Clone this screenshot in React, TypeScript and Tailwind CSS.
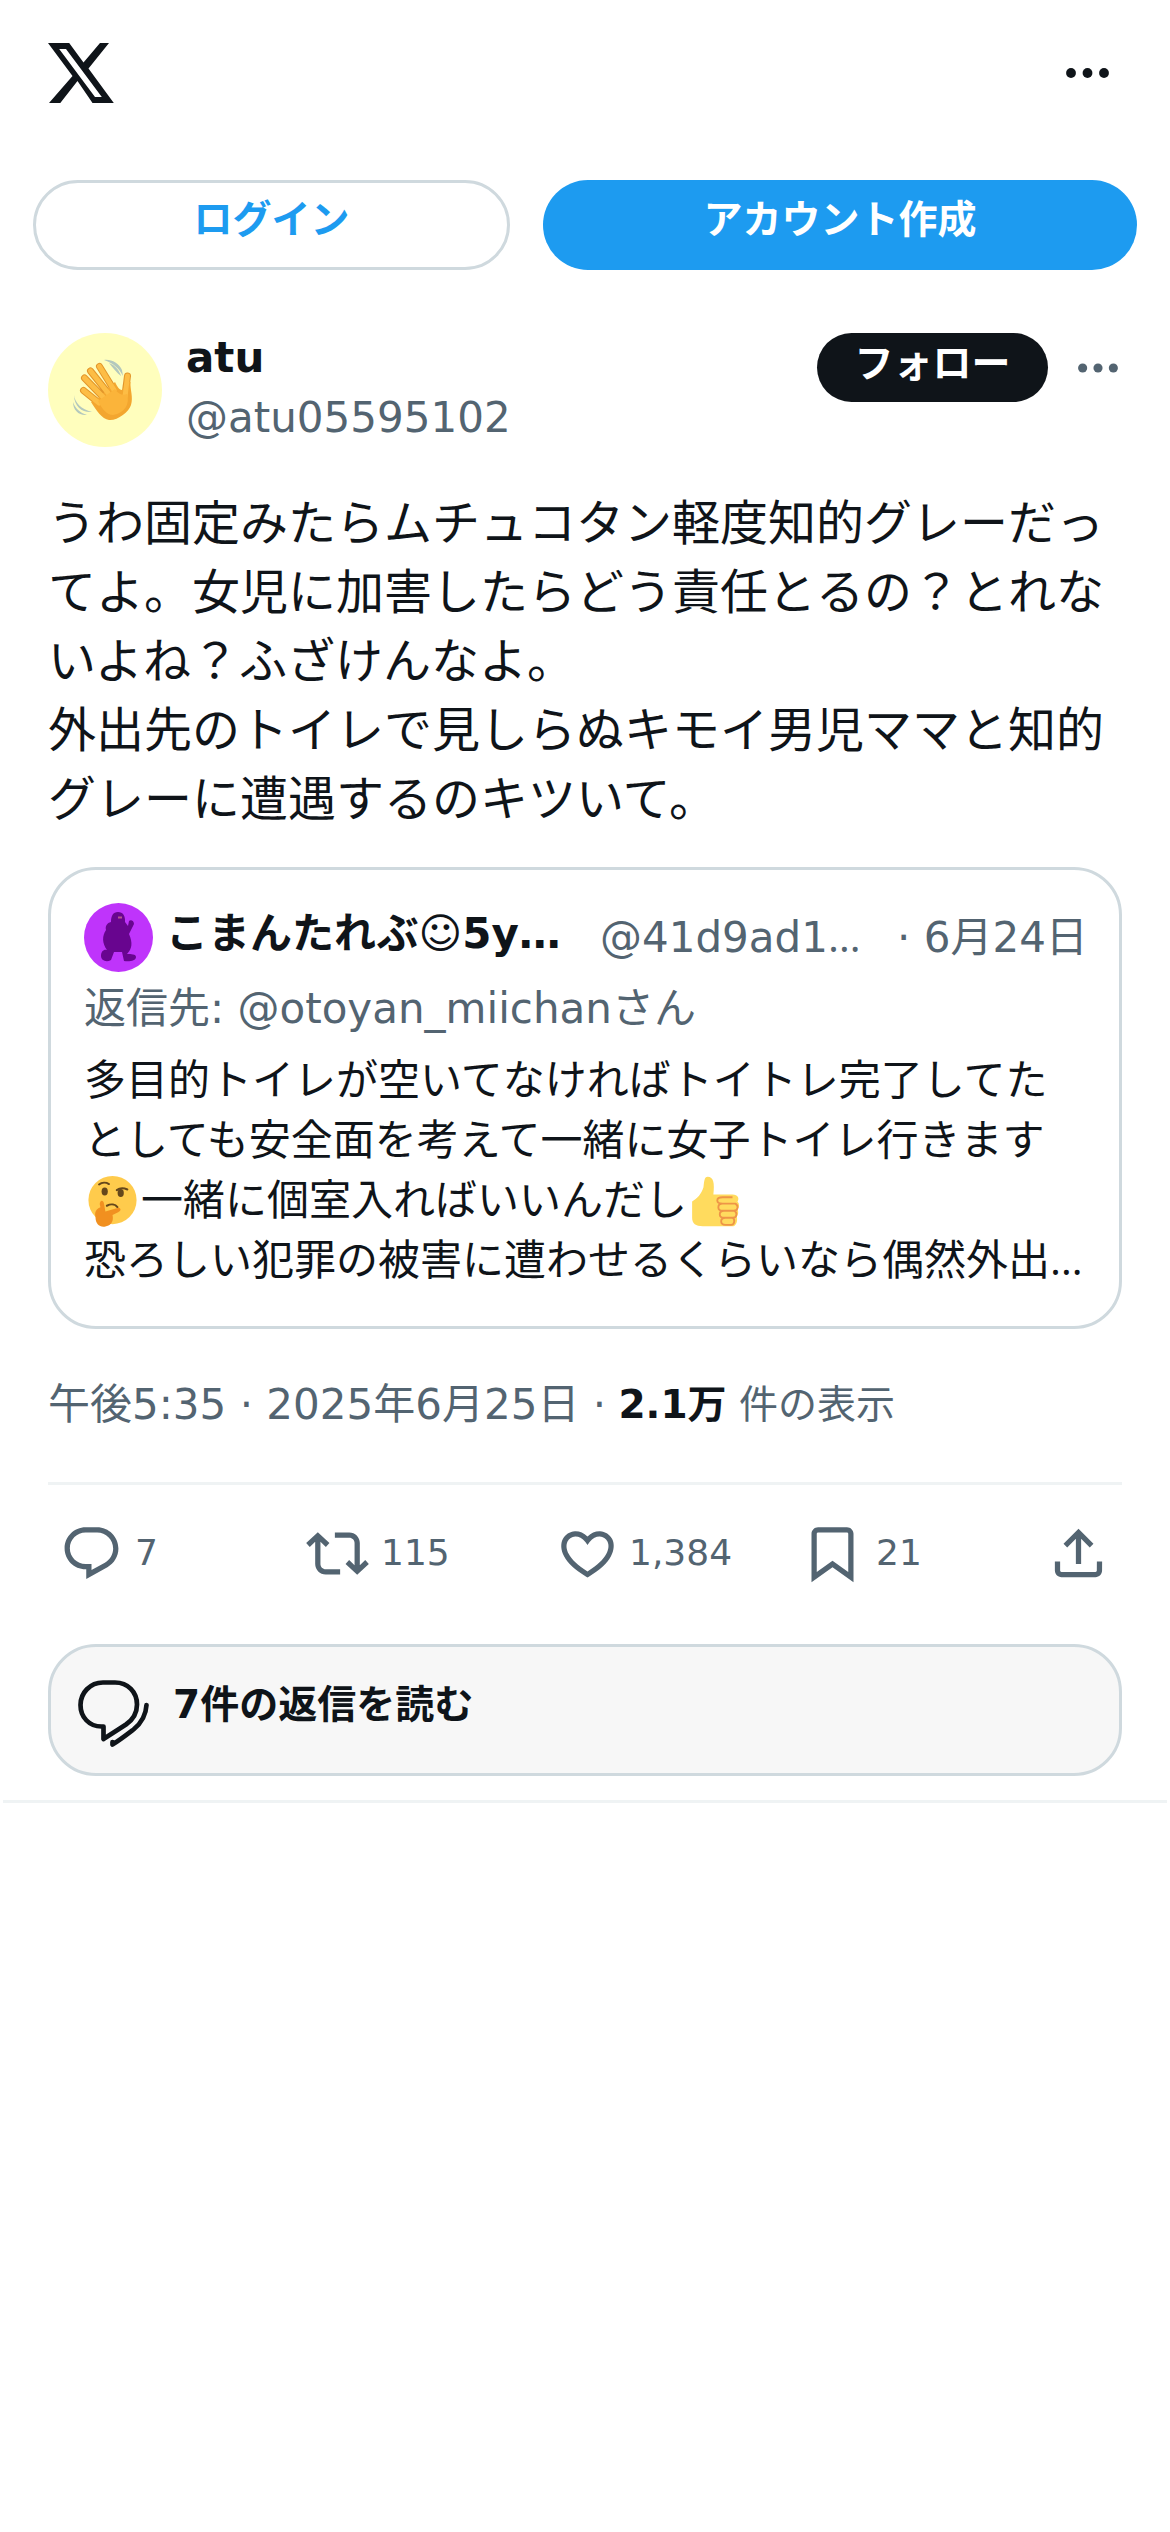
import type { ReactNode } from "react";

interface IconProps {
  className?: string;
}

interface ActionProps {
  icon: ReactNode;
  label?: string;
  className?: string;
}

// --- Icons ---

const XLogo = ({ className }: IconProps) => (
  <svg viewBox="0 0 66 60" className={className} fill="currentColor">
    <path
      fillRule="evenodd"
      d="M0 0h21.200l14.300 19.500L52 0h9L40.500 25.500 65.800 60H44.500L29.500 38 12.300 60H1L24.500 33zM11.200 6 47 54h6.800L18 6z"
    />
  </svg>
);

const Dots = ({ className }: IconProps) => (
  <svg viewBox="0 0 43 10" className={className} fill="currentColor">
    <circle cx="5" cy="5" r="4.900" />
    <circle cx="21.500" cy="5" r="4.900" />
    <circle cx="38" cy="5" r="4.900" />
  </svg>
);

const ReplyIcon = ({ className }: IconProps) => (
  <svg viewBox="0 0 24 24" className={className} fill="currentColor">
    <path d="M1.751 10c0-4.420 3.584-8 8.005-8h4.366c4.490 0 8.129 3.640 8.129 8.130 0 2.960-1.607 5.680-4.196 7.110l-8.054 4.460v-3.690h-.067c-4.490.1-8.183-3.510-8.183-8.010zm8.005-6c-3.317 0-6.005 2.690-6.005 6 0 3.370 2.770 6.080 6.138 6.010l.351-.010h1.761v2.300l5.087-2.810c1.951-1.080 3.163-3.130 3.163-5.360 0-3.390-2.744-6.130-6.129-6.130H9.756z" />
  </svg>
);

const RetweetIcon = ({ className }: IconProps) => (
  <svg viewBox="0 0 24 24" className={className} fill="currentColor">
    <path d="M4.500 3.880l4.432 4.140-1.364 1.460L5.500 7.550V16c0 1.100.896 2 2 2H13v2H7.500c-2.209 0-4-1.790-4-4V7.550L1.432 9.480.068 8.020 4.500 3.880zM16.500 6H11V4h5.500c2.209 0 4 1.790 4 4v8.450l2.068-1.930 1.364 1.460-4.432 4.140-4.432-4.140 1.364-1.460 2.068 1.930V8c0-1.100-.896-2-2-2z" />
  </svg>
);

const HeartIcon = ({ className }: IconProps) => (
  <svg viewBox="0 0 24 24" className={className} fill="currentColor">
    <path d="M16.697 5.500c-1.222-.060-2.679.510-3.890 2.160l-.805 1.090-.806-1.090C9.984 6.010 8.526 5.440 7.304 5.500c-1.243.070-2.349.780-2.910 1.910-.552 1.120-.633 2.780.479 4.820 1.074 1.970 3.257 4.270 7.129 6.610 3.870-2.340 6.052-4.640 7.126-6.610 1.111-2.040 1.030-3.700.477-4.820-.561-1.130-1.666-1.840-2.908-1.910zm4.187 7.690c-1.351 2.480-4.001 5.120-8.379 7.670l-.503.300-.504-.300c-4.379-2.550-7.029-5.190-8.382-7.670-1.360-2.500-1.410-4.860-.514-6.670.887-1.790 2.647-2.910 4.601-3.010 1.651-.090 3.368.560 4.798 2.010 1.429-1.450 3.146-2.100 4.796-2.010 1.954.100 3.714 1.220 4.601 3.010.896 1.810.846 4.170-.514 6.670z" />
  </svg>
);

const BookmarkIcon = ({ className }: IconProps) => (
  <svg viewBox="0 0 24 24" className={className} fill="currentColor">
    <path d="M4 4.500C4 3.120 5.119 2 6.500 2h11C18.881 2 20 3.120 20 4.500v18.440l-8-5.710-8 5.710V4.500zM6.500 4c-.276 0-.5.220-.5.500v14.560l6-4.290 6 4.290V4.500c0-.280-.224-.5-.5-.5h-11z" />
  </svg>
);

const ShareIcon = ({ className }: IconProps) => (
  <svg viewBox="0 0 24 24" className={className} fill="currentColor">
    <path d="M12 2.590l5.700 5.700-1.410 1.420L13 6.410V16h-2V6.410l-3.300 3.300-1.410-1.420L12 2.590zM21 15l-.020 3.510c0 1.380-1.120 2.490-2.500 2.490H5.500C4.110 21 3 19.880 3 18.500V15h2v3.500c0 .280.220.5.5.5h12.980c.280 0 .5-.220.5-.5L19 15h2z" />
  </svg>
);

const RepliesIcon = ({ className }: IconProps) => (
  <svg
    viewBox="0 0 72 68"
    className={className}
    fill="none"
    stroke="currentColor"
    strokeWidth="4.700"
    strokeLinejoin="round"
    strokeLinecap="round"
  >
    <path d="M25 2.500h12c13 0 22 9.500 22 22 0 9-4.500 15.500-11 20L25.500 59V46.500h-2C11 46.500 2.500 37 2.500 25S12 2.500 25 2.500z" />
    <path d="M68.500 25c-.500 10-5 18-13 24.500C49 54.500 42 60 34.500 64.500v-2.500" />
  </svg>
);

// --- Emoji ---

const WavingHand = ({ className }: IconProps) => (
  <svg viewBox="0 0 60 62" className={className} fill="none" overflow="visible">
    <g stroke="#e3962a" strokeWidth="7" strokeLinecap="round">
      <path d="M24 44 8.500 31.500M28 38 9.500 19M33 34 15.500 12M39 31 24.500 7.500" />
      <path d="M50 36 52.500 17" />
    </g>
    <path
      d="M21 41 40 23c2 4 4 8 7 8 2-1 3-5 3-9l5.500 1c-.500 8 3 15 .500 23C54 53 42 62 34 61c-7-1-13-10-18-18z"
      fill="#f3a62f"
    />
    <g stroke="#fdbd45" strokeWidth="5" strokeLinecap="round">
      <path d="M24 44 8.500 31.500M28 38 9.500 19M33 34 15.500 12M39 31 24.500 7.500" />
      <path d="M50 38 52.500 17" />
    </g>
    <path d="M23 42 40 30c3 5 8 7 12 5 3 10-2 19-14 21-6 0-11-6-15-14z" fill="#fbb43a" />
    <g fill="#b3c8bd">
      <path d="M29 1c7-1 15 3 18 10l1 6c-4-8-10-13-19-16zM34 4c6 2 10 7 12 13-4-3-8-8-12-13z" />
      <path d="M-1 36c1 8 7 14 18 17-9 1-18-5-18-17zM-2 43c2 6 7 11 14 13-8 1-14-5-14-13z" />
    </g>
  </svg>
);

const ThinkingFace = ({ className }: IconProps) => (
  <svg viewBox="0 0 36 36" className={className}>
    <circle cx="18" cy="17" r="17" fill="#ffcb4c" />
    <ellipse cx="12.500" cy="11" rx="2.200" ry="2.800" fill="#65471b" />
    <ellipse cx="23.800" cy="12" rx="2.200" ry="2.800" fill="#65471b" />
    <g fill="none" stroke="#65471b" strokeWidth="1.400" strokeLinecap="round">
      <path d="M8.500 6c2-1.500 5-1.500 7-.300M21 10c2-1.500 5-1.500 7.500-.500M14 21c3-1.500 6-1 7.500 1" />
    </g>
    <path
      d="M6 29c-1-4 1-6 3.500-7L9 20c0-3 2.500-3.500 3-.500L13 25l8.500-2.500c2.500-.500 3 2.200.500 3L18 27.500c1 4.500-1 7.500-5 8.200C9 36.500 6 34 6 29z"
      fill="#f19020"
    />
  </svg>
);

const ThumbsUp = ({ className }: IconProps) => (
  <svg viewBox="0 0 36 36" className={className}>
    <path
      d="M1.500 18C5 16 8 13 9.500 8c.500-4 .500-7.500 3-7.500C16.500.5 17.500 5 16.500 13H30c4 0 5 3 3.500 5 1.500 1.500 1.500 4 0 5.500 1 2 .500 4-.500 5 1 4-1 7-3 7H9c-5 0-7.500-2-7.500-6z"
      fill="#ffdb5e"
    />
    <path
      d="M32 19.500h-9c-5 0-5-4.500 0-4.500h7M32 19.500c-1.500 0-9 0-9 0-4 0-4 5 0 5h8c3 0 3.500-3.500 1-5zM31 24.500h-7c-4 0-4 5 0 5h6c3.500 0 3.500-4 1-5zM30 29.500h-5c-4 0-4 5 0 5h4c2.500 0 3-4 1-5z"
      fill="none"
      stroke="#ee9547"
      strokeWidth="1.300"
    />
  </svg>
);

const MonsterAvatar = () => (
  <svg viewBox="0 0 69 69" className="size-[69px] shrink-0 rounded-full">
    <rect width="69" height="69" fill="#bf34fb" />
    <path
      d="M34 9c5 0 7.500 4 7 10l3 4 1-5c2-2 5 0 5 3l-5 10c4 9 3 15-2 20 4 0 9 0 9 3 0 4-7 5-12 4l-2-9h-8l-3 8c-5 3-10 0-10-4 0-5 3-7 6-6-5-7-5-14-1-20-1-4 1-7 5-8 0-6 2-10 7-10z"
      fill="#68058f"
    />
    <path d="M34 14.500h4" stroke="#b8568f" strokeWidth="2" />
  </svg>
);

// --- Sections ---

const Action = ({ icon, label, className = "" }: ActionProps) => (
  <div className={`flex items-center ${className}`}>
    {icon}
    {label && <span className="text-[36px] leading-none">{label}</span>}
  </div>
);

const Ellipsis = () => <span className="font-['Open_Sans'] leading-none">…</span>;

const QuotedPost = () => (
  <section className="mt-[33px] h-[462px] rounded-[48px] border-[3px] border-[#cfd9de] px-[33px] pt-[33px]">
    <div className="flex h-[69px] items-center text-[42px] leading-[60px] whitespace-nowrap">
      <MonsterAvatar />
      <span className="ml-[13px] w-[434px] shrink-0 pb-2 font-bold">こまんたれぶ☺5y…</span>
      <span className="w-[297px] shrink-0 text-[#536471]">
        @41d9ad1
        <Ellipsis />
      </span>
      <span className="text-[#536471]">· 6月24日</span>
    </div>
    <p className="text-[42px] leading-[73px] text-[#536471]">返信先: @otoyan_miichanさん</p>
    <div className="mt-[6px] text-[42px] leading-[60px] whitespace-nowrap">
      <p>多目的トイレが空いてなければトイトレ完了してた</p>
      <p>としても安全面を考えて一緒に女子トイレ行きます</p>
      <p className="flex items-center">
        <ThinkingFace className="mr-[3px] ml-[3px] size-[51px]" />
        一緒に個室入ればいいんだし
        <ThumbsUp className="ml-[3px] size-[51px]" />
      </p>
      <p>
        恐ろしい犯罪の被害に遭わせるくらいなら偶然外出
        <Ellipsis />
      </p>
    </div>
  </section>
);

export default function App() {
  return (
    <div className="h-[2532px] w-[1170px] overflow-hidden bg-white font-['DejaVu_Sans','Noto_Sans_CJK_JP',sans-serif] text-[#0f1419]">
      <header className="flex h-[180px] items-start justify-between pt-[43px] pr-[61px] pl-[48px]">
        <XLogo className="h-[60px] w-[66px]" />
        <Dots className="mt-[25px] h-[10px] w-[43px]" />
      </header>

      <div className="flex gap-[33px] px-[33px]">
        <button className="h-[90px] w-[477px] rounded-full border-[3px] border-[#cfd9de] pb-[9px] text-[39px] font-bold text-[#1d9bf0]">
          ログイン
        </button>
        <button className="h-[90px] flex-1 rounded-full bg-[#1d9bf0] pb-[9px] text-[39px] font-bold text-white">
          アカウント作成
        </button>
      </div>

      <article className="px-[48px] pt-[63px]">
        <div className="flex h-[114px]">
          <div className="flex size-[114px] items-center justify-center rounded-full bg-[#fffebd]">
            <WavingHand className="h-[62px] w-[60px]" />
          </div>
          <div className="ml-[24px] text-[42px] leading-[60px]">
            <p className="-mt-[5px] font-bold">atu</p>
            <p className="text-[#536471]">@atu05595102</p>
          </div>
          <button className="ml-auto h-[69px] w-[231px] rounded-full bg-[#0f1419] pb-2 text-[39px] leading-none font-bold text-white">
            フォロー
          </button>
          <Dots className="mt-[30px] mr-[4px] ml-[30px] h-[10px] w-[40px] text-[#536471]" />
        </div>

        <p className="mt-[42px] text-[48px] leading-[69px] whitespace-nowrap">
          うわ固定みたらムチュコタン軽度知的グレーだっ
          <br />
          てよ。女児に加害したらどう責任とるの？とれな
          <br />
          いよね？ふざけんなよ。
          <br />
          外出先のトイレで見しらぬキモイ男児ママと知的
          <br />
          グレーに遭遇するのキツいて。
        </p>

        <QuotedPost />

        <div className="mt-[46px] flex h-[110px] items-start border-b-[3px] border-[#eff3f4] text-[42px] leading-[60px] whitespace-pre text-[#536471]">
          <span>午後5:35 · 2025年6月25日 · </span>
          <span className="-ml-[1px] text-[39px]">
            <b className="text-[#0f1419]">2.1万</b> 件の表示
          </span>
        </div>

        <div className="flex h-[159px] items-center pb-[23px] text-[#536471]">
          <Action
            className="w-[254px] gap-[12px] pl-[12px]"
            icon={<ReplyIcon className="size-[63px]" />}
            label="7"
          />
          <Action
            className="w-[254px] gap-[12px] pl-[4px]"
            icon={<RetweetIcon className="size-[63px]" />}
            label="115"
          />
          <Action
            className="w-[245px] gap-[10px]"
            icon={<HeartIcon className="size-[63px]" />}
            label="1,384"
          />
          <Action
            className="gap-[12px]"
            icon={<BookmarkIcon className="size-[63px]" />}
            label="21"
          />
          <Action className="mr-[12px] ml-auto" icon={<ShareIcon className="size-[63px]" />} />
        </div>

        <button className="flex h-[132px] w-full items-center rounded-[48px] border-[3px] border-[#cfd9de] bg-[#f7f7f7] pl-[27px] text-[39px] font-bold">
          <RepliesIcon className="mt-[7px] h-[68px] w-[72px]" />
          <span className="ml-[23px] pb-[10px]">7件の返信を読む</span>
        </button>
      </article>
      <div className="mx-[3px] mt-[24px] h-[3px] bg-[#eff3f4]" />
    </div>
  );
}
